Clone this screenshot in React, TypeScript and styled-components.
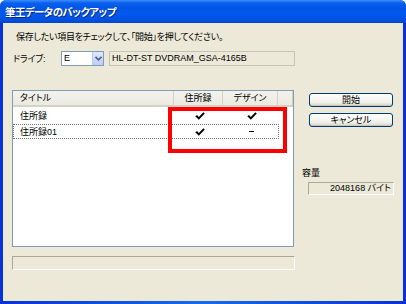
import React from "react";
import styled, { createGlobalStyle } from "styled-components";

const Global = createGlobalStyle`
  html, body { margin: 0; padding: 0; background: #ffffff; }
  body { font-family: "Liberation Sans", "Noto Sans CJK JP", sans-serif; }
  * { box-sizing: border-box; }
`;

const FONT = `"Liberation Sans", "Noto Sans CJK JP", sans-serif`;

const Window = styled.div`
  width: 406px;
  height: 304px;
  display: flex;
  flex-direction: column;
  background: #0a4fdb;
  border-radius: 6px 6px 0 0;
  overflow: hidden;
`;

const TitleBar = styled.div`
  height: 23px;
  flex: none;
  display: flex;
  align-items: center;
  padding-left: 5px;
  background: linear-gradient(
    to bottom,
    #3d8dfb 0px,
    #0a60ee 3px,
    #0055e5 8px,
    #0058ee 14px,
    #0050df 20px,
    #0044cc 23px
  );
`;

const TitleText = styled.span`
  font-family: ${FONT};
  font-weight: bold;
  font-size: 10.5px;
  color: #ffffff;
  letter-spacing: -0.6px;
  font-feature-settings: "palt";
  text-shadow: 1px 1px 0 #0a2a8a;
`;

const Frame = styled.div`
  flex: 1;
  display: flex;
  padding: 0 3px 3px 3px;
  background: linear-gradient(to right, #0831d9, #166aee 50%, #0831d9);
`;

const Body = styled.div`
  flex: 1;
  background: #ece9d8;
  padding: 8px 0 0 9px;
  display: flex;
  flex-direction: column;
  font-family: ${FONT};
  font-size: 9px;
  color: #000;
`;

const Instruction = styled.div`
  line-height: 12px;
  height: 12px;
  margin-left: 4px;
  font-feature-settings: "palt";
  letter-spacing: -0.3px;
`;

const DriveRow = styled.div`
  margin-top: 8px;
  height: 15px;
  display: flex;
  align-items: center;
`;

const Label = styled.span<{ $width?: number }>`
  width: ${(p) => (p.$width ? `${p.$width}px` : "auto")};
  padding-left: 1px;
  font-feature-settings: "palt";
  letter-spacing: -0.2px;
`;

const Combo = styled.div`
  width: 43px;
  height: 15px;
  border: 1px solid #7f9db9;
  background: #fff;
  display: flex;
  align-items: stretch;
`;

const ComboText = styled.span`
  flex: 1;
  padding-left: 2px;
  line-height: 13px;
  font-size: 9px;
`;

const ComboButton = styled.div`
  width: 11px;
  background: linear-gradient(to bottom, #dfe9fc, #bccdf5);
  border-left: 1px solid #b9c9ef;
  display: flex;
  align-items: center;
  justify-content: center;
`;

const ReadOnlyBox = styled.div<{ $width: number; $align?: string }>`
  width: ${(p) => p.$width}px;
  height: 14px;
  border: 1px solid #c7c4b5;
  background: #ece9d8;
  line-height: 12px;
  padding: 0 2px;
  text-align: ${(p) => p.$align || "left"};
  font-size: 9px;
  white-space: nowrap;
`;

const DriveBox = styled(ReadOnlyBox)`
  margin-left: 5px;
  height: 15px;
  line-height: 13px;
`;

const Main = styled.div`
  margin-top: 24px;
  display: flex;
  align-items: flex-start;
`;

const ListBox = styled.div`
  position: relative;
  width: 282px;
  height: 157px;
  border: 1px solid #7f9db9;
  background: #fff;
  display: flex;
  flex-direction: column;
`;

const HeaderRow = styled.div`
  height: 16px;
  display: grid;
  grid-template-columns: 161px 49px 55px 1fr;
  background: linear-gradient(to bottom, #f3f2ec, #ebeae2);
  border-bottom: 2px solid #d6d2c2;
`;

const HeaderCell = styled.div<{ $center?: boolean }>`
  line-height: 14px;
  padding-left: ${(p) => (p.$center ? 0 : "7px")};
  text-align: ${(p) => (p.$center ? "center" : "left")};
  border-right: 1px solid #d3d0c0;
  font-feature-settings: "palt";
  color: #000;
`;

const Row = styled.div<{ $focus?: boolean }>`
  height: ${(p) => (p.$focus ? 15 : 17)}px;
  width: 266px;
  display: grid;
  grid-template-columns: 161px 49px 55px;
  align-items: center;
  border: 1px dotted ${(p) => (p.$focus ? "#777" : "transparent")};
`;

const Cell = styled.div<{ $center?: boolean }>`
  padding-left: ${(p) => (p.$center ? 0 : "6px")};
  display: flex;
  justify-content: ${(p) => (p.$center ? "center" : "flex-start")};
  align-items: center;
  font-feature-settings: "palt";
`;

const Highlight = styled.div`
  position: absolute;
  left: 155px;
  top: 16px;
  width: 119px;
  height: 46px;
  border: 4px solid #ff0000;
  pointer-events: none;
`;

const RightCol = styled.div`
  margin-left: 8px;
  width: 92px;
  display: flex;
  flex-direction: column;
`;

const Button = styled.button`
  margin-left: 7px;
  width: 84px;
  height: 14px;
  padding: 0;
  border: 1px solid #003c74;
  border-radius: 3px;
  background: linear-gradient(to bottom, #ffffff, #f0f0ea 70%, #d6d0c5);
  font-family: ${FONT};
  font-size: 9px;
  line-height: 12px;
  color: #000;
  font-feature-settings: "palt";
  box-shadow: inset 0 -1px 0 #c9c5b8;
  &:first-child {
    margin-top: 3px;
  }
  & + & {
    margin-top: 6px;
  }
`;

const CapLabel = styled.div`
  margin-top: 40px;
  line-height: 12px;
  font-feature-settings: "palt";
`;

const CapBox = styled(ReadOnlyBox)`
  margin-left: 6px;
  margin-top: 3px;
  height: 13px;
  line-height: 11px;
  border-color: #aca899 #ffffff #ffffff #aca899;
  font-feature-settings: "palt";
`;

const Progress = styled.div`
  margin-top: 9px;
  width: 283px;
  height: 14px;
  border: 1px solid;
  border-color: #aca899 #ffffff #ffffff #aca899;
`;

const Check = () => (
  <svg width="10" height="8" viewBox="0 0 10 8">
    <path d="M0.3 4.2 L2 3 L3.8 5 L8.3 0.3 L9.8 1.6 L3.8 7.7 Z" fill="#000" />
  </svg>
);

const Dash = styled.span`
  display: block;
  width: 5px;
  height: 1px;
  background: #000;
`;

const Arrow = () => (
  <svg width="7" height="5" viewBox="0 0 7 5">
    <path d="M0.5 0.8 L3.5 3.8 L6.5 0.8" fill="none" stroke="#4d6185" strokeWidth="1.6" />
  </svg>
);

export default function App() {
  return (
    <>
      <Global />
      <Window>
        <TitleBar>
          <TitleText>筆王データのバックアップ</TitleText>
        </TitleBar>
        <Frame>
          <Body>
            <Instruction>保存したい項目をチェックして、「開始」を押してください。</Instruction>
            <DriveRow>
              <Label $width={49}>ドライブ:</Label>
              <Combo>
                <ComboText>E</ComboText>
                <ComboButton>
                  <Arrow />
                </ComboButton>
              </Combo>
              <DriveBox $width={186}>HL-DT-ST DVDRAM_GSA-4165B</DriveBox>
            </DriveRow>
            <Main>
              <ListBox>
                <HeaderRow>
                  <HeaderCell>タイトル</HeaderCell>
                  <HeaderCell $center>住所録</HeaderCell>
                  <HeaderCell $center>デザイン</HeaderCell>
                  <HeaderCell />
                </HeaderRow>
                <Row>
                  <Cell>住所録</Cell>
                  <Cell $center>
                    <Check />
                  </Cell>
                  <Cell $center>
                    <Check />
                  </Cell>
                </Row>
                <Row $focus>
                  <Cell>住所録01</Cell>
                  <Cell $center>
                    <Check />
                  </Cell>
                  <Cell $center>
                    <Dash />
                  </Cell>
                </Row>
                <Highlight />
              </ListBox>
              <RightCol>
                <Button>開始</Button>
                <Button>キャンセル</Button>
                <CapLabel>容量</CapLabel>
                <CapBox $width={86} $align="right">
                  2048168 バイト
                </CapBox>
              </RightCol>
            </Main>
            <Progress />
          </Body>
        </Frame>
      </Window>
    </>
  );
}
